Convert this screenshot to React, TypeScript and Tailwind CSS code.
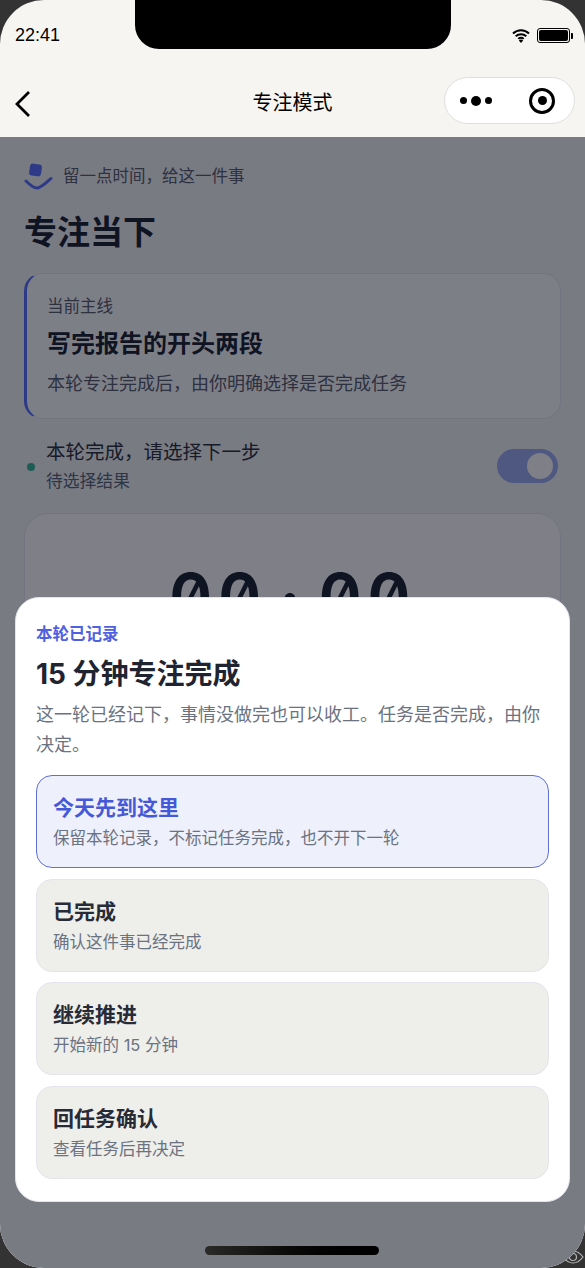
const FONT = "font-['Inter','Noto_Sans_CJK_SC',sans-serif]";

const OPTIONS = [
  { title: "今天先到这里", desc: "保留本轮记录，不标记任务完成，也不开下一轮", active: true },
  { title: "已完成", desc: "确认这件事已经完成", active: false },
  { title: "继续推进", desc: "开始新的 15 分钟", active: false },
  { title: "回任务确认", desc: "查看任务后再决定", active: false },
];

function StatusBar() {
  return (
    <div className="relative h-[69px] shrink-0">
      <div className="absolute left-[135px] top-0 h-[49px] w-[316px] rounded-b-[24px] bg-black" />
      <div className="flex items-center justify-between pl-[15px] pr-[12px] pt-[25px]">
        <span className="font-['Liberation_Sans',sans-serif] text-[18px] leading-[21px] text-black">22:41</span>
        <div className="flex items-center gap-[7px]">
          <svg width="18" height="15" viewBox="0 0 18 15">
            <path d="M1 5.500a11.500 11.500 0 0 1 16 0M3.700 8.300a7.600 7.600 0 0 1 10.600 0M6.300 10.900a3.800 3.800 0 0 1 5.400 0" fill="none" stroke="black" strokeWidth="2" />
            <path d="M9 15 6.800 12.500a3.200 3.200 0 0 1 4.400 0z" fill="black" />
          </svg>
          <div className="flex items-center gap-[1px]">
            <div className="h-[15px] w-[33px] rounded-[3px] border border-black p-[1px]">
              <div className="h-full w-full rounded-[2px] bg-black" />
            </div>
            <div className="h-[6px] w-[2px] rounded-r-[1px] bg-black" />
          </div>
        </div>
      </div>
    </div>
  );
}

function NavBar() {
  return (
    <div className="relative flex h-[68px] shrink-0 items-center justify-center">
      <svg className="absolute left-[14px] top-[21px]" width="17" height="28" viewBox="0 0 17 28">
        <path d="M15 2 3 14l12 12" fill="none" stroke="black" strokeWidth="2.800" />
      </svg>
      <span className={`${FONT} text-[20px] leading-[28px] text-black`}>专注模式</span>
      <div className="absolute left-[444px] top-[8px] flex h-[47px] w-[131px] items-center justify-between rounded-full border border-[#dedede] bg-white pl-[15px] pr-[19px]">
        <div className="flex items-center gap-[4px]">
          <div className="h-[7px] w-[7px] rounded-full bg-black" />
          <div className="h-[10px] w-[10px] rounded-full bg-black" />
          <div className="h-[7px] w-[7px] rounded-full bg-black" />
        </div>
        <div className="flex h-[26px] w-[26px] items-center justify-center rounded-full border-[3.5px] border-black">
          <div className="h-[9px] w-[9px] rounded-full bg-black" />
        </div>
      </div>
    </div>
  );
}

function PageBehind() {
  return (
    <div className="flex-1 bg-[#f2f6f6] px-[24px] pt-[21px]">
      <div className="flex h-[36px] items-center gap-[9px]">
        <svg width="30" height="28" viewBox="0 0 30 28">
          <rect x="5.500" y="2" width="12" height="12" rx="3" transform="rotate(8 11.500 8)" fill="#5a74ff" />
          <path d="M2 19c3.500 3.500 7 7 11 7s9-5 14-9.500" fill="none" stroke="#5a74ff" strokeWidth="3" strokeLinecap="round" />
        </svg>
        <span className={`${FONT} text-[16.500px] leading-[24px] text-[#5b6270]`}>留一点时间，给这一件事</span>
      </div>
      <h1 className={`${FONT} mt-[18px] text-[33px] font-bold leading-[40px] text-[#1f2937]`}>专注当下</h1>
      <div className="mt-[21px] h-[146px] rounded-[18px] border border-[#e6e8f0] border-l-[3px] border-l-[#5a74ff] bg-[#fbffff] pl-[20px] pt-[20px]">
        <div className={`${FONT} text-[16.500px] leading-[24px] text-[#5b6270]`}>当前主线</div>
        <div className={`${FONT} mt-[11px] text-[24px] font-bold leading-[30px] text-[#1f2937]`}>写完报告的开头两段</div>
        <div className={`${FONT} mt-[12px] text-[18px] leading-[26px] text-[#5b6270]`}>本轮专注完成后，由你明确选择是否完成任务</div>
      </div>
      <div className="mt-[17px] flex h-[60px] items-center justify-between pr-[3px]">
        <div className="flex items-center gap-[11px] pl-[3px]">
          <div className="mt-[2px] h-[8px] w-[8px] rounded-full bg-[#3ab896]" />
          <div>
            <div className={`${FONT} text-[19.500px] leading-[26px] text-[#2f3642]`}>本轮完成，请选择下一步</div>
            <div className={`${FONT} mt-[4px] text-[16.800px] leading-[24px] text-[#5b6b7c]`}>待选择结果</div>
          </div>
        </div>
        <div className="flex h-[34px] w-[61px] items-center justify-end rounded-full bg-[#9eb0f0] pr-[5px]">
          <div className="h-[26px] w-[26px] rounded-full bg-white" />
        </div>
      </div>
      <div className="mt-[17px] flex h-[300px] justify-center rounded-[24px] border border-[#e6e8f0] bg-white pt-[38px]">
        <span className="font-['Inter',sans-serif] text-[68px] font-semibold leading-[90px] tracking-[5px] text-[#1f2937] slashed-zero tabular-nums">
          00
          <span className="mx-[14px] inline-block translate-y-[6px]">:</span>
          00
        </span>
      </div>
    </div>
  );
}

function OptionCard({ title, desc, active }: { title: string; desc: string; active: boolean }) {
  return (
    <div
      className={`flex h-[93px] flex-col justify-center rounded-[16px] border px-[16px] ${
        active ? "border-[#5f70dc] bg-[#eef0fb]" : "border-[#e4e5ec] bg-[#eeeeea]"
      }`}
    >
      <div className={`${FONT} text-[21px] font-bold leading-[30px] ${active ? "text-[#4458d8]" : "text-[#272b38]"}`}>{title}</div>
      <div className={`${FONT} mt-[3px] text-[16.500px] leading-[24px] text-[#6b7280]`}>{desc}</div>
    </div>
  );
}

function ResultSheet() {
  return (
    <div className="absolute left-[15px] top-[597px] w-[555px] rounded-[24px] border border-[#e4e5ec] bg-white px-[20px] pb-[22px] pt-[23px]">
      <div className={`${FONT} text-[16.500px] font-bold leading-[26px] text-[#4f61e0]`}>本轮已记录</div>
      <div className={`${FONT} mt-[9px] text-[28px] font-bold leading-[36px] text-[#1f2430]`}>15 分钟专注完成</div>
      <p className={`${FONT} mt-[8px] text-[18px] leading-[30px] text-[#6b7280]`}>这一轮已经记下，事情没做完也可以收工。任务是否完成，由你决定。</p>
      <div className="mt-[15px] flex flex-col gap-[10.600px]">
        {OPTIONS.map((option) => (
          <OptionCard key={option.title} {...option} />
        ))}
      </div>
    </div>
  );
}

export default function App() {
  return (
    <div className="relative h-[1268px] w-[585px] overflow-hidden bg-[#333333]">
      {/* watermark that peeks out behind the phone's bottom right corner */}
      <svg className="absolute left-[562px] top-[1250px]" width="22" height="14" viewBox="0 0 22 14">
        <path d="M1 7c3-4 6.500-6 10-6s7 2 10 6c-3 4-6.500 6-10 6S4 11 1 7z" fill="none" stroke="#b5b5b5" strokeWidth="1.200" />
        <circle cx="11" cy="7" r="3.500" fill="none" stroke="#b5b5b5" strokeWidth="1.200" />
      </svg>
      <div className="relative flex h-full w-full flex-col overflow-hidden rounded-[44px] bg-[#f6f5f1]">
        <StatusBar />
        <NavBar />
        <PageBehind />
        <div className="absolute inset-x-0 bottom-0 top-[137px] bg-[#000010]/50" />
        <ResultSheet />
        <div className="absolute bottom-[13px] left-[205px] h-[9px] w-[174px] rounded-full bg-gradient-to-r from-[#2a2a28] to-black" />
      </div>
    </div>
  );
}
